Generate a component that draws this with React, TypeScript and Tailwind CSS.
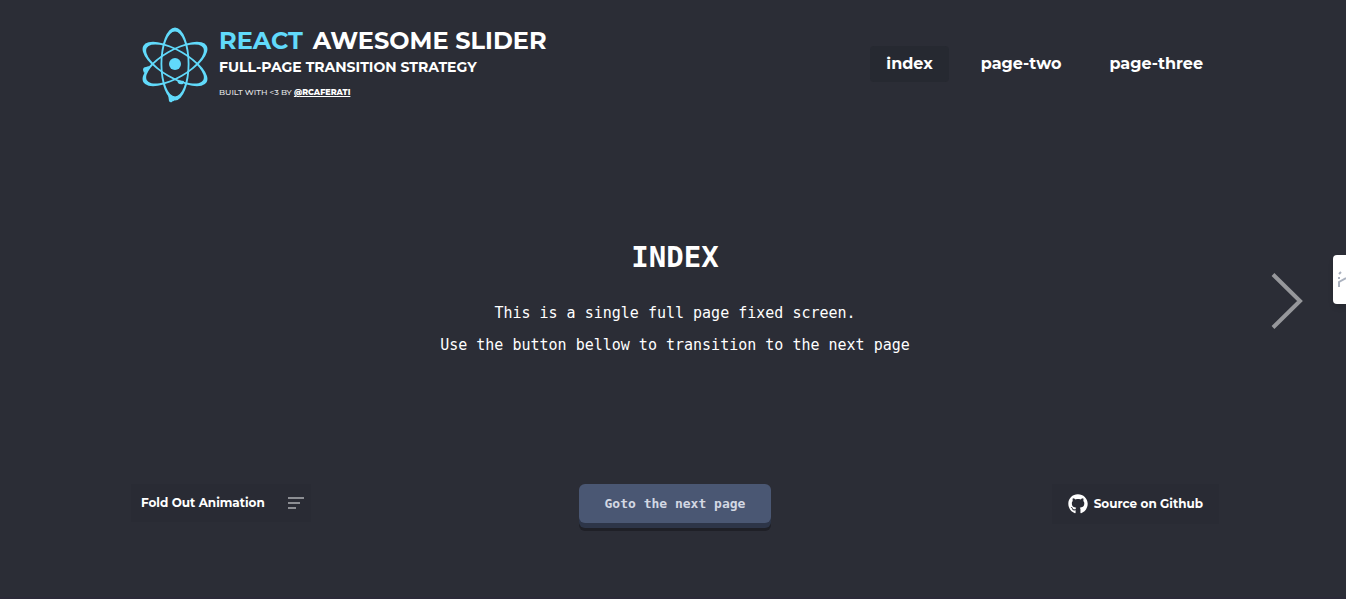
import { FaGithub } from 'react-icons/fa';

const orbit =
  'M50 11.500A14.500 36.500 0 0 1 50 84.500A14.500 36.500 0 0 1 50 11.500ZM50 15.500A12.700 32.500 0 0 0 50 80.500A12.700 32.500 0 0 0 50 15.500Z';

function Logo() {
  return (
    <svg viewBox="16 10 68 78" className="h-[78px] w-[68px] shrink-0 fill-[#61dafb]" aria-hidden="true">
      <g fillRule="evenodd">
        <path d={orbit} />
        <path d={orbit} transform="rotate(60 50 48)" />
        <path d={orbit} transform="rotate(120 50 48)" />
      </g>
      <circle cx="50" cy="48" r="6" />
      <path d="M43 78l7 3-1 4q-2 0-2 1-2 1-3-1z" />
      <path d="M18 54q0-3 3-3l3-1-1 4-4 3z" />
      <path d="M52 64l7 1-1 3q-3 1-5-1z" />
    </svg>
  );
}

const pages = ['index', 'page-two', 'page-three'];

export default function App() {
  return (
    <div className="relative flex min-h-screen flex-col border-b-2 border-[#2b2a38] bg-[#2b2d36] pl-1 font-['Montserrat','Inter',sans-serif] text-white">
      <header className="mx-auto flex w-full max-w-[1088px] items-center justify-between pt-[26px]">
        <div className="flex items-start gap-[10px] pl-[10px]">
          <Logo />
          <div className="uppercase">
            <h1 className="flex gap-[10px] text-2xl leading-[30px] font-bold whitespace-nowrap">
              <span className="text-[#61dafb]">React</span>
              <span>Awesome Slider</span>
            </h1>
            <h2 className="text-sm leading-[22px] font-bold whitespace-nowrap">Full-page transition strategy</h2>
            <p className="mt-2 text-[8px] leading-3 font-medium text-[#e4e5e7]">
              Built with &lt;3 by{' '}
              <a href="#author" className="font-extrabold text-white underline">
                @rcaferati
              </a>
            </p>
          </div>
        </div>
        <nav className="flex gap-4 pb-[2px]">
          {pages.map((page, i) => (
            <a
              key={page}
              href={`#${page}`}
              className={`rounded px-4 py-[6px] text-base font-bold whitespace-nowrap ${i === 0 ? 'bg-[#262931]' : ''}`}
            >
              {page}
            </a>
          ))}
        </nav>
      </header>

      <main className="flex flex-1 flex-col items-center justify-center px-6 pt-[10px] text-center font-['Consolas','DejaVu_Sans_Mono',monospace]">
        <h2 className="text-[29px] leading-10 font-bold">INDEX</h2>
        <p className="mt-5 text-[15px] leading-8">
          This is a single full page fixed screen.
          <br />
          Use the button bellow to transition to the next page
        </p>
      </main>

      <footer className="mx-auto grid w-full max-w-[1088px] grid-cols-3 items-start pb-[73px]">
        <button
          type="button"
          className="flex h-[38px] w-[180px] items-center justify-between justify-self-start bg-[#292b34] pr-[7px] pl-[10px] text-xs font-bold whitespace-nowrap"
        >
          Fold Out Animation
          <svg viewBox="0 0 16 12" className="h-3 w-4 fill-[#8c8e93]" aria-hidden="true">
            <path d="M0 0h16v2H0zM0 5h12v2H0zM0 10h8v2H0z" />
          </svg>
        </button>
        <button
          type="button"
          className="h-[39px] w-[192px] justify-self-center rounded-md bg-[#4a5773] font-['Consolas','DejaVu_Sans_Mono',monospace] text-[13px] font-bold text-[#d3d8e3] shadow-[0_5px_0_#2d3548,0_8px_0_#1f2027]"
        >
          Goto the next page
        </button>
        <a
          href="#source"
          className="flex h-10 items-center gap-[6px] justify-self-end bg-[#292b34] px-4 text-xs font-bold whitespace-nowrap"
        >
          <FaGithub className="size-5" aria-hidden="true" />
          Source on Github
        </a>
      </footer>

      <button type="button" aria-label="Next page" className="absolute top-[272px] right-[43px]">
        <svg viewBox="0 0 32 58" className="h-[58px] w-8 fill-none stroke-[#96979b]" strokeWidth="4" aria-hidden="true">
          <path d="M2 2.500L29 29 2 55.500" />
        </svg>
      </button>
      <button
        type="button"
        aria-label="Open side panel"
        className="absolute top-[255px] right-0 flex h-[49px] w-[13px] items-center justify-end rounded-l bg-white shadow-md"
      >
        <svg viewBox="0 0 8 18" className="h-[18px] w-2 fill-none stroke-[#abb2bf]" strokeWidth="2" aria-hidden="true">
          <path d="M1 16v-5l7-4M1 8V6M1 3l2-2" />
        </svg>
      </button>
    </div>
  );
}
